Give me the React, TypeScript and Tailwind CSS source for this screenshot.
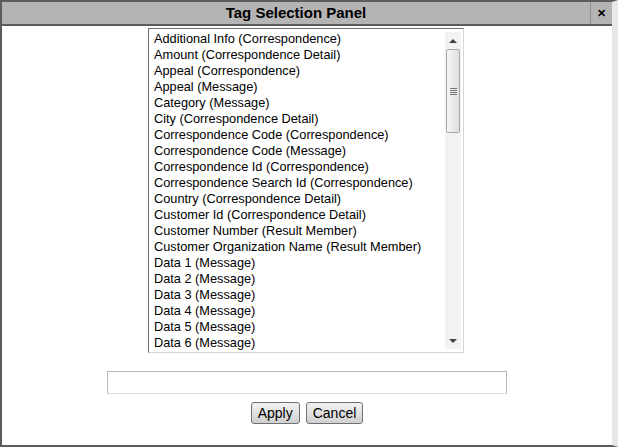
import React from "react";

const items = [
  "Additional Info (Correspondence)",
  "Amount (Correspondence Detail)",
  "Appeal (Correspondence)",
  "Appeal (Message)",
  "Category (Message)",
  "City (Correspondence Detail)",
  "Correspondence Code (Correspondence)",
  "Correspondence Code (Message)",
  "Correspondence Id (Correspondence)",
  "Correspondence Search Id (Correspondence)",
  "Country (Correspondence Detail)",
  "Customer Id (Correspondence Detail)",
  "Customer Number (Result Member)",
  "Customer Organization Name (Result Member)",
  "Data 1 (Message)",
  "Data 2 (Message)",
  "Data 3 (Message)",
  "Data 4 (Message)",
  "Data 5 (Message)",
  "Data 6 (Message)",
];

export default function App() {
  return (
    <div
      className="w-[618px] h-[447px] flex flex-col bg-white border-l-2 border-t-2 border-b-2 border-r-[6px] border-l-[#5c5c5c] border-t-[#5c5c5c] border-b-[#5c5c5c] border-r-[#e8e8e8] overflow-hidden"
      style={{ fontFamily: '"Liberation Sans", Arial, sans-serif' }}
    >
      <div className="h-[24px] flex bg-[#b4b4b4] border-b-2 border-[#5c5c5c] shrink-0">
        <div className="flex-1 flex items-center justify-center text-[15px] font-bold text-black">
          Tag Selection Panel
        </div>
        <div className="w-[22px] border-l border-[#8c8c8c] flex items-center justify-center text-[11px] font-bold text-black">
          ✕
        </div>
      </div>
      <div className="flex-1 flex flex-col items-center">
        <div className="mt-[2px] -ml-[2px] w-[316px] h-[325px] flex border border-t-[#6e6e6e] border-l-[#6e6e6e] border-r-[#d4d4d4] border-b-[#d4d4d4] overflow-hidden">
          <div className="flex-1 pl-[5px] pt-[2px] overflow-hidden">
            {items.map((t) => (
              <div key={t} className="h-[16px] leading-[16px] text-[12.75px] text-black whitespace-nowrap">
                {t}
              </div>
            ))}
          </div>
          <div className="w-[16px] my-[3px] mr-[2px] bg-[#f2f2f2] flex flex-col items-center">
            <div className="h-[17px] flex items-center justify-center">
              <div className="w-0 h-0 border-l-[4px] border-r-[4px] border-b-[4px] border-l-transparent border-r-transparent border-b-[#404040]" />
            </div>
            <div className="w-[14px] h-[84px] rounded-[2px] border border-[#a8a8a8] bg-gradient-to-r from-[#f6f6f6] to-[#dedede] flex flex-col items-center justify-center gap-[1px]">
              <div className="w-[7px] h-[1px] bg-[#777]" />
              <div className="w-[7px] h-[1px] bg-[#777]" />
              <div className="w-[7px] h-[1px] bg-[#777]" />
              <div className="w-[7px] h-[1px] bg-[#777]" />
            </div>
            <div className="flex-1" />
            <div className="h-[17px] flex items-center justify-center">
              <div className="w-0 h-0 border-l-[4px] border-r-[4px] border-t-[4px] border-l-transparent border-r-transparent border-t-[#404040]" />
            </div>
          </div>
        </div>
        <div className="mt-[18px] w-[400px] h-[23px] border border-[#b8b8b8] border-b-[#dcdcdc] bg-white" />
        <div className="mt-[8px] flex gap-[6px]">
          <button className="h-[22px] px-[6px] text-[14px] text-black border border-[#707070] rounded-[3px] bg-gradient-to-b from-[#f2f2f2] to-[#d0d0d0] leading-none">
            Apply
          </button>
          <button className="h-[22px] px-[6px] text-[14px] text-black border border-[#707070] rounded-[3px] bg-gradient-to-b from-[#f2f2f2] to-[#d0d0d0] leading-none">
            Cancel
          </button>
        </div>
      </div>
    </div>
  );
}
